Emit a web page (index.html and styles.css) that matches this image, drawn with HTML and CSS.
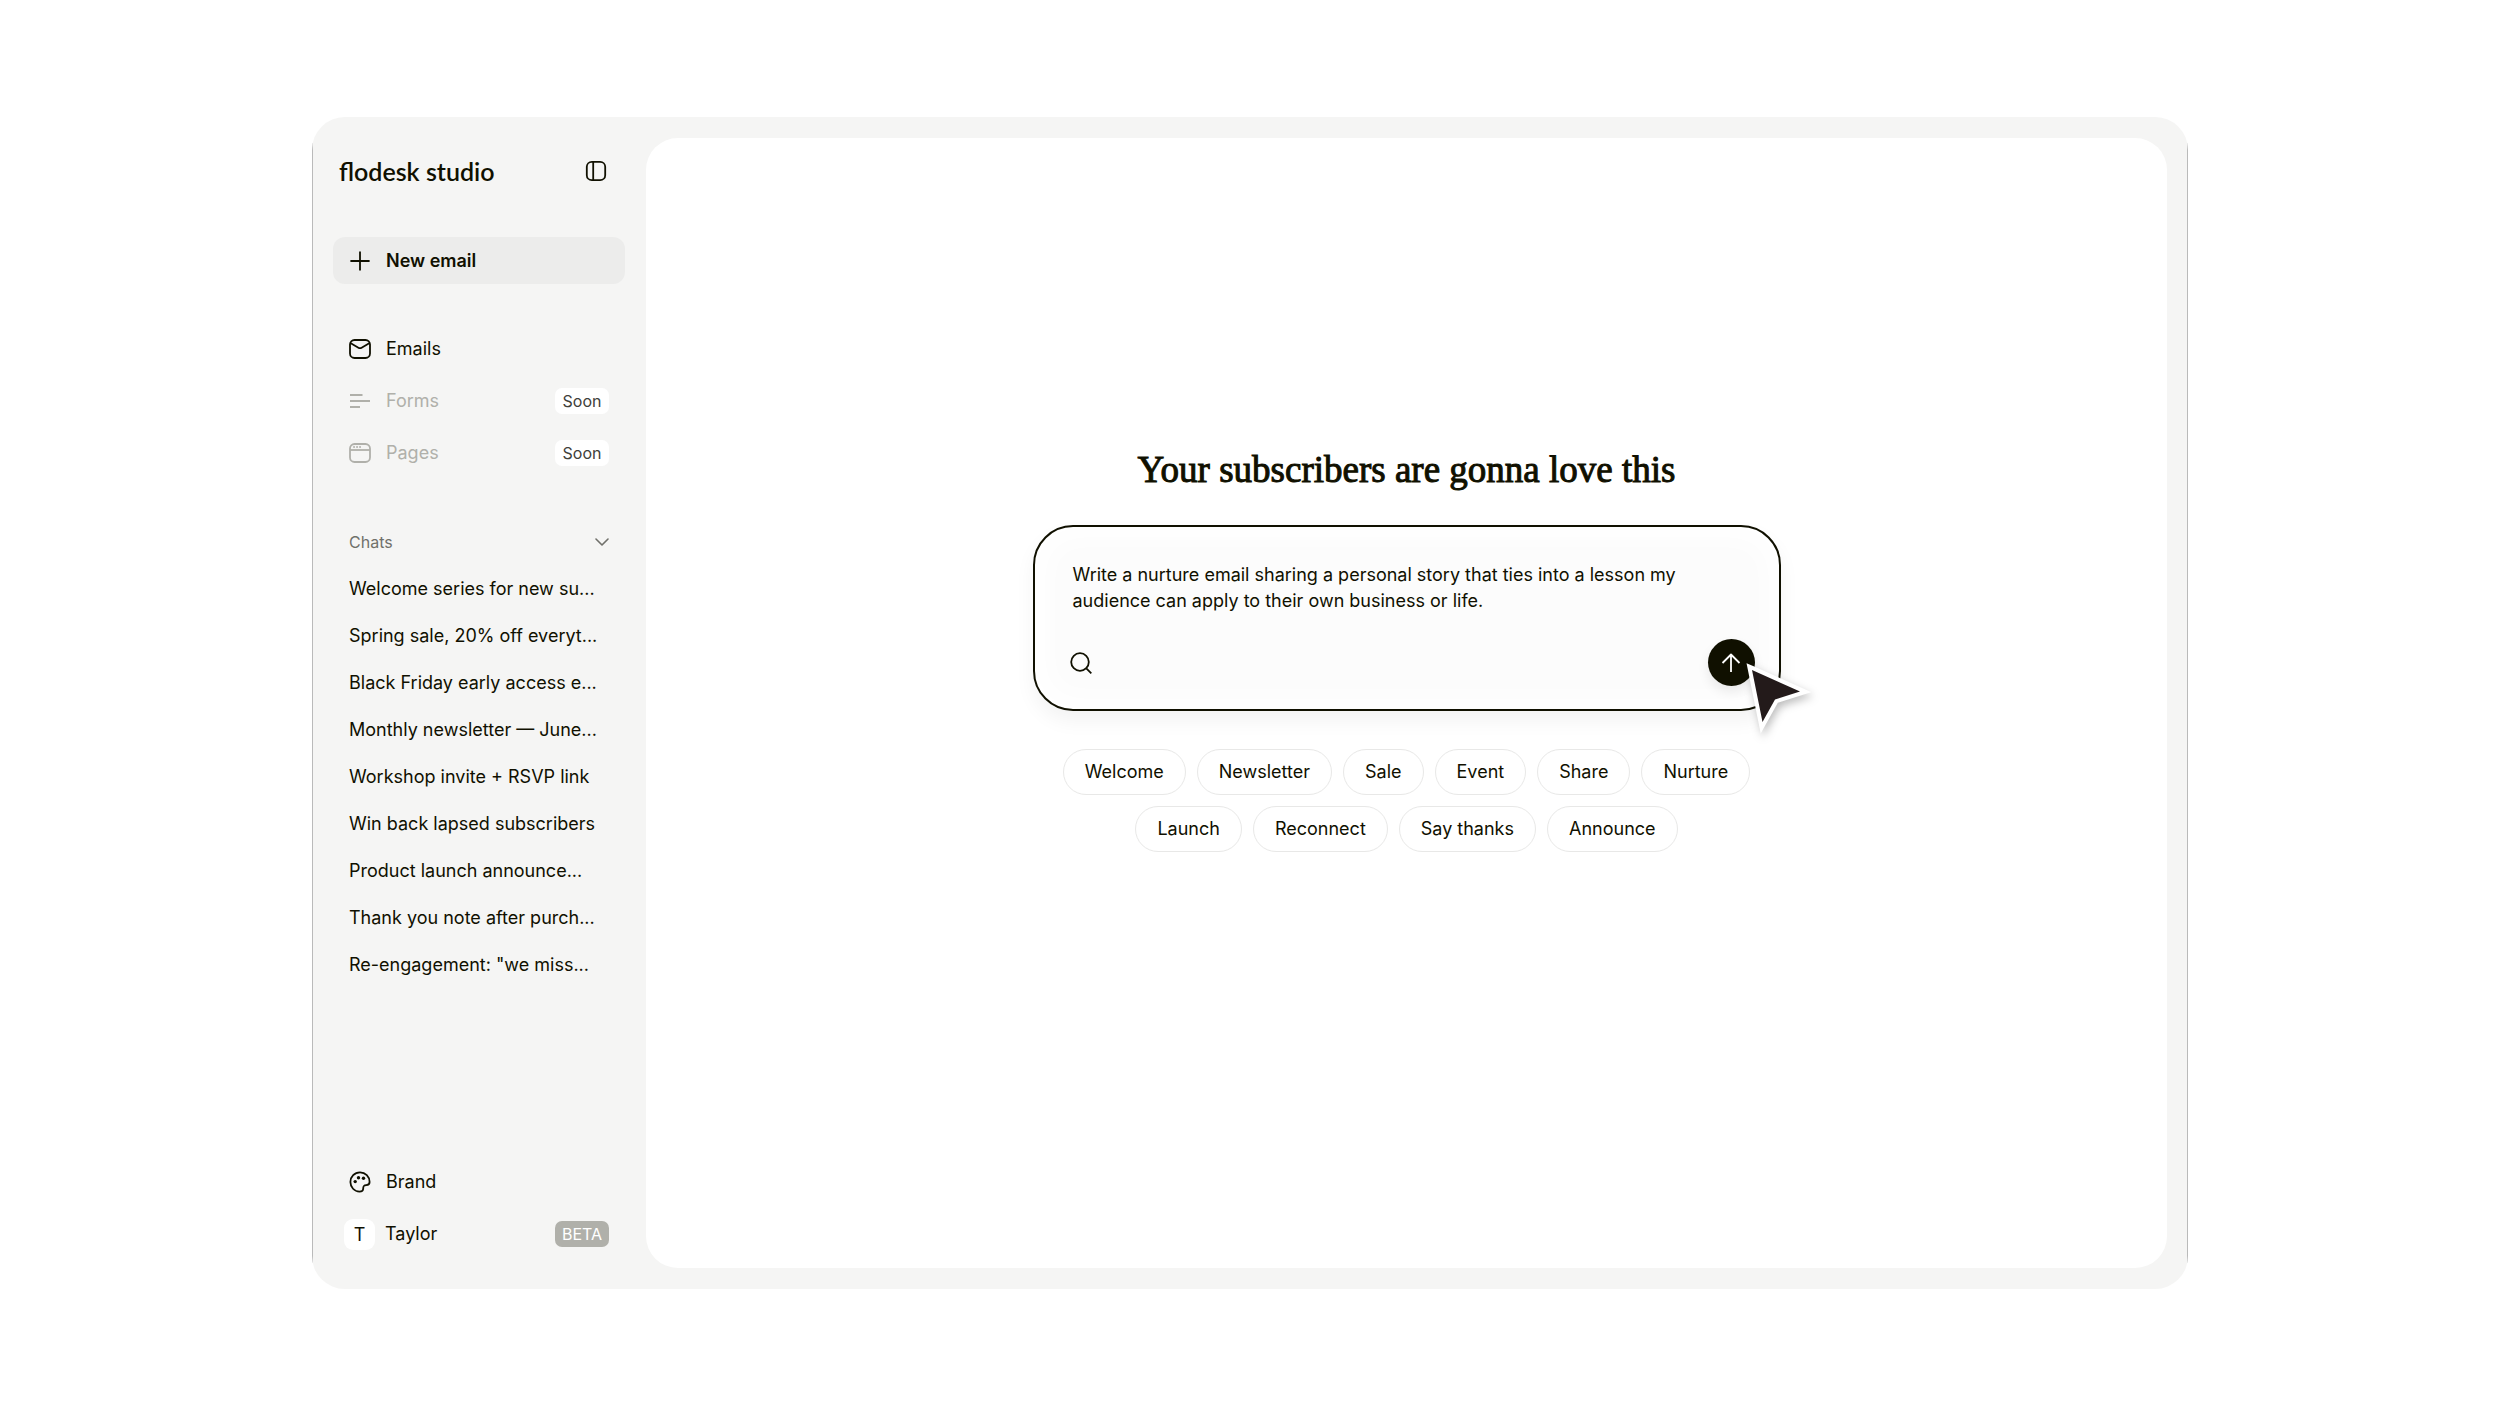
FILE: index.html
```html
<!DOCTYPE html>
<html lang="en">
<head>
    <meta charset="UTF-8">
    <meta name="viewport" content="width=device-width, initial-scale=1.0">
    <title>flodesk studio</title>
    <link rel="stylesheet" href="styles.css">
</head>
<body>
    <div class="frame">
        <aside class="sidebar">
            <header class="brand-bar">
                <a href="#" class="logo">flodesk studio</a>
                <button type="button" class="icon-button" aria-label="Toggle sidebar">
                    <svg class="icon" viewBox="0 0 22 22"><rect x="1.8" y="1.8" width="18.4" height="18.4" rx="5"/><path d="M8.2 1.8v18.4"/></svg>
                </button>
            </header>

            <button type="button" class="new-email">
                <svg class="icon" viewBox="0 0 22 22"><path d="M11 1.4v19.2M1.4 11h19.2"/></svg>
                New email
            </button>

            <nav class="nav">
                <a href="#" class="nav-item">
                    <svg class="icon" viewBox="0 0 22 22"><rect x="1" y="2" width="20" height="18" rx="4.5"/><path d="M1.8 5.2l7.6 4.500c1 .6 2.200.6 3.200 0l7.600-4.500"/></svg>
                    Emails
                </a>
                <a href="#" class="nav-item disabled">
                    <svg class="icon" viewBox="0 0 22 22"><path d="M1 5h12.5M1 11h20M1 17h10"/></svg>
                    Forms
                    <span class="badge">Soon</span>
                </a>
                <a href="#" class="nav-item disabled">
                    <svg class="icon" viewBox="0 0 22 22"><rect x="1" y="2" width="20" height="18" rx="4.5"/><path d="M1 8h20"/><path class="dots" d="M5 5h.1M8 5h.1M11 5h.1"/></svg>
                    Pages
                    <span class="badge">Soon</span>
                </a>
            </nav>

            <section class="chats">
                <button type="button" class="chats-toggle">
                    Chats
                    <svg class="chevron" viewBox="0 0 14 8"><path d="M1 1l6 6 6-6"/></svg>
                </button>
                <a href="#" class="chat">Welcome series for new su...</a>
                <a href="#" class="chat">Spring sale, 20% off everyt...</a>
                <a href="#" class="chat">Black Friday early access e...</a>
                <a href="#" class="chat">Monthly newsletter — June...</a>
                <a href="#" class="chat">Workshop invite + RSVP link</a>
                <a href="#" class="chat">Win back lapsed subscribers</a>
                <a href="#" class="chat">Product launch announce...</a>
                <a href="#" class="chat">Thank you note after purch...</a>
                <a href="#" class="chat">Re-engagement: "we miss...</a>
            </section>

            <footer class="account">
                <a href="#" class="nav-item">
                    <svg class="icon" viewBox="0 0 22 22"><path d="M20.6 11c0-5.400-4.200-9.600-9.600-9.600S1.400 5.700 1.400 11c0 5.200 4 9.600 9.100 9.600 2.100 0 3.700-1.100 3.700-3.100 0-2.600.6-3.300 3-3.400 2-.1 3.400-1 3.400-3.100z"/><circle class="dot" cx="6.200" cy="10.600" r="1.700"/><circle class="dot" cx="9.500" cy="6.700" r="1.700"/><circle class="dot" cx="14.500" cy="7.300" r="1.700"/></svg>
                    Brand
                </a>
                <a href="#" class="nav-item user">
                    <span class="avatar">T</span>
                    Taylor
                    <span class="badge beta">BETA</span>
                </a>
            </footer>
        </aside>

        <main class="panel">
            <h1>Your subscribers are gonna love this</h1>

            <form class="composer">
                <textarea rows="2" aria-label="Prompt">Write a nurture email sharing a personal story that ties into a lesson my audience can apply to their own business or life.</textarea>
                <div class="composer-actions">
                    <button type="button" class="icon-button" aria-label="Search">
                        <svg class="icon" viewBox="0 0 22 22"><circle cx="10" cy="10" r="8.800"/><path d="M16.300 16.300l5 5"/></svg>
                    </button>
                    <button type="button" class="send" aria-label="Send">
                        <svg class="icon" viewBox="0 0 22 22"><path d="M11 20V2.500M2.500 11L11 2.500l8.500 8.500"/></svg>
                    </button>
                </div>
                <svg class="pointer" viewBox="0 0 80 90"><path d="M21 21L69 42.500 44 50.500 31.500 73z"/></svg>
            </form>

            <div class="chips">
                <button type="button" class="chip">Welcome</button>
                <button type="button" class="chip">Newsletter</button>
                <button type="button" class="chip">Sale</button>
                <button type="button" class="chip">Event</button>
                <button type="button" class="chip">Share</button>
                <button type="button" class="chip">Nurture</button>
                <button type="button" class="chip">Launch</button>
                <button type="button" class="chip">Reconnect</button>
                <button type="button" class="chip">Say thanks</button>
                <button type="button" class="chip">Announce</button>
            </div>
        </main>
    </div>
</body>
</html>
```
FILE: styles.css
```css
* {
    box-sizing: border-box;
}
body {
    margin: 0;
    min-height: 100vh;
    display: flex;
    padding: 117px 312px;
    background: #fff;
    color: #101000;
    font-family: Inter, "Liberation Sans", sans-serif;
    font-size: 18px;
    line-height: 26px;
}
button, textarea {
    font: inherit;
    color: inherit;
    background: none;
    border: none;
    margin: 0;
    padding: 0;
}
button {
    cursor: pointer;
}
a {
    color: inherit;
    text-decoration: none;
}
.frame {
    flex: 1;
    display: flex;
    gap: 21px;
    padding: 21px;
    border-radius: 33px;
    /* side hairlines stop where the corners start */
    background:
        linear-gradient(#bababa, #bababa) left center / 1px calc(100% - 52px) no-repeat,
        linear-gradient(#bababa, #bababa) right center / 1px calc(100% - 52px) no-repeat,
        #f5f5f4;
}
.icon {
    width: 22px;
    height: 22px;
    flex: none;
    fill: none;
    stroke: currentColor;
    stroke-width: 1.8;
    stroke-linejoin: round;
}
.icon .dots {
    stroke-linecap: round;
}
.icon .dot {
    fill: currentColor;
    stroke: none;
}
.icon-button {
    display: flex;
}

/* Sidebar */
.sidebar {
    width: 292px;
    flex: none;
    display: flex;
    flex-direction: column;
}
.brand-bar {
    display: flex;
    justify-content: space-between;
    align-items: center;
    height: 66px;
    padding: 0 18px 0 6px;
    margin-bottom: 33px;
}
.logo {
    font-family: Lato, sans-serif;
    font-size: 25px;
    font-weight: 600;
}
.new-email {
    display: flex;
    align-items: center;
    gap: 15px;
    height: 47px;
    padding: 0 16px;
    margin-bottom: 39px;
    background: #ececeb;
    border-radius: 12px;
    font-weight: 600;
}
.nav-item {
    display: flex;
    align-items: center;
    gap: 15px;
    height: 52px;
    padding: 0 16px;
}
.disabled {
    color: #b0b0aa;
}
.badge {
    margin-left: auto;
    width: 54px;
    border-radius: 7px;
    background: #fff;
    color: #40403a;
    font-size: 16px;
    text-align: center;
}
.beta {
    background: #b0b0aa;
    color: #fff;
}
.chats {
    display: flex;
    flex-direction: column;
    margin-top: 39px;
}
.chats-toggle {
    display: flex;
    justify-content: space-between;
    align-items: center;
    height: 47px;
    padding: 0 16px;
    color: #70706a;
    font-size: 16px;
}
.chevron {
    width: 14px;
    height: 8px;
    fill: none;
    stroke: currentColor;
    stroke-width: 1.6;
    stroke-linecap: round;
    stroke-linejoin: round;
}
.chat {
    height: 47px;
    padding: 0 16px;
    line-height: 47px;
    white-space: nowrap;
}
.account {
    margin-top: auto;
    margin-bottom: 8px;
}
.user {
    gap: 10px;
    padding-left: 11px;
}
.avatar {
    width: 31px;
    border-radius: 9px;
    background: #fff;
    line-height: 31px;
    text-align: center;
}

/* Main panel */
.panel {
    flex: 1;
    display: flex;
    flex-direction: column;
    align-items: center;
    padding: 308px 20px 0;
    background: #fff;
    border-radius: 32px;
}
h1 {
    margin: 0 0 31px;
    font-family: "Liberation Serif", serif;
    font-size: 37px;
    font-weight: 400;
    line-height: 48px;
    -webkit-text-stroke: 1px #101000;
}
.composer {
    position: relative;
    width: 100%;
    max-width: 748px;
    padding: 35px 24px 23px 35px;
    border: 2px solid #101000;
    border-radius: 40px;
    background: #fcfcfc;
    box-shadow: 0 10px 20px rgba(0, 0, 0, 0.05), inset 0 0 30px 10px #fff;
}
textarea {
    display: block;
    width: 100%;
    padding: 0 44px 0 3px;
    outline: none;
    resize: none;
    overflow: hidden;
}
.composer-actions {
    display: flex;
    justify-content: space-between;
    align-items: center;
    margin-top: 25px;
}
.send {
    display: flex;
    justify-content: center;
    align-items: center;
    width: 47px;
    height: 47px;
    border-radius: 50%;
    background: #101000;
    color: #fff;
    box-shadow: 0 6px 12px rgba(0, 0, 0, 0.08);
}
.pointer {
    position: absolute;
    right: -32px;
    bottom: -30px;
    width: 80px;
    height: 90px;
    fill: #231a1a;
    stroke: #fff;
    stroke-width: 8;
    stroke-miterlimit: 8;
    paint-order: stroke;
    filter: drop-shadow(2px 4px 4px rgba(0, 0, 0, 0.25));
}
.chips {
    display: flex;
    flex-wrap: wrap;
    justify-content: center;
    gap: 11px;
    max-width: 720px;
    margin-top: 38px;
}
.chip {
    height: 46px;
    padding: 0 21px;
    border: 1px solid #e8e8e7;
    border-radius: 23px;
    background: #fff;
}
```
